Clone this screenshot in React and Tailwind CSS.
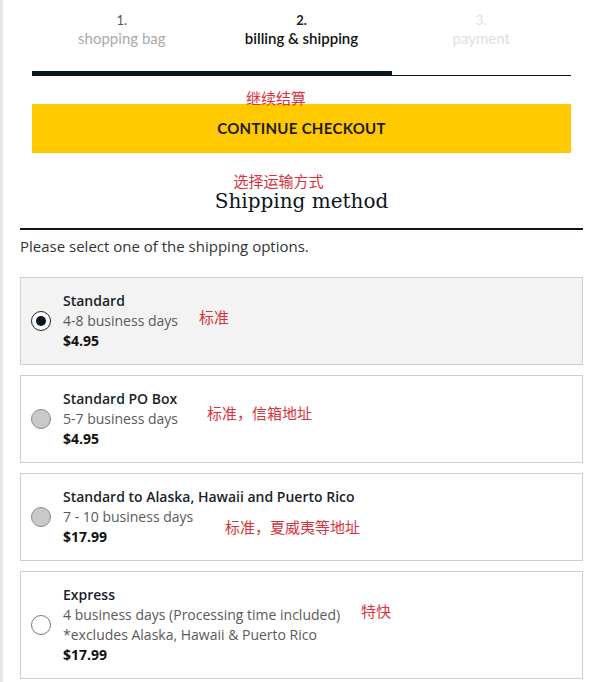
import React, { useState } from 'react';

const steps = [
  { num: '1.', label: 'shopping bag', state: 'done' },
  { num: '2.', label: 'billing & shipping', state: 'current' },
  { num: '3.', label: 'payment', state: 'todo' },
];

const options = [
  { id: 'standard', title: 'Standard', lines: ['4-8 business days'], price: '$4.95', note: '标准', noteClass: 'left-[178px] top-[30px]', radio: 'default' },
  { id: 'po', title: 'Standard PO Box', lines: ['5-7 business days'], price: '$4.95', note: '标准，信箱地址', noteClass: 'left-[186px] top-[28px]', radio: 'grey' },
  { id: 'ak', title: 'Standard to Alaska, Hawaii and Puerto Rico', lines: ['7 - 10 business days'], price: '$17.99', note: '标准，夏威夷等地址', noteClass: 'left-[204px] top-[44px]', radio: 'grey' },
  { id: 'express', title: 'Express', lines: ['4 business days (Processing time included)', '*excludes Alaska, Hawaii & Puerto Rico'], price: '$17.99', note: '特快', noteClass: 'left-[340px] top-[30px]', radio: 'white' },
];

const cjk = "font-['Noto_Sans_CJK_SC',sans-serif]";
const body = "font-['Open_Sans','Noto_Sans',sans-serif]";

function Radio({ checked, kind }) {
  if (checked) {
    return (
      <span className="flex h-[20px] w-[20px] items-center justify-center rounded-full border-[1.5px] border-[#222] bg-white">
        <span className="h-[10px] w-[10px] rounded-full bg-[#0b1622]" />
      </span>
    );
  }
  const look = kind === 'grey' ? 'bg-[#c9c9c9] border-[#8a8a8a]' : 'bg-white border-[#777]';
  return <span className={`block h-[20px] w-[20px] rounded-full border ${look}`} />;
}

export default function App() {
  const [selected, setSelected] = useState('standard');

  return (
    <div className="min-h-[682px] w-[600px] border-l-[3px] border-[#e6e6e6] bg-white">
      {/* checkout steps */}
      <div className="mx-[29px] pt-[12px]">
        <div className="grid grid-cols-3 font-['Lato',sans-serif] text-center">
          {steps.map((s) => (
            <div key={s.num} className="flex flex-col items-center">
              <span
                className={`text-[13px] leading-[17px] ${
                  s.state === 'current' ? 'font-bold text-[#222]' : s.state === 'done' ? 'text-[#555]' : 'text-[#e0e0e0]'
                }`}
              >
                {s.num}
              </span>
              <span
                className={`text-[15px] leading-[19px] ${
                  s.state === 'current' ? 'font-semibold text-[#111]' : s.state === 'done' ? 'text-[#a9a9a9]' : 'text-[#dedede]'
                }`}
              >
                {s.label}
              </span>
            </div>
          ))}
        </div>
        <div className="mt-[23px] flex items-end">
          <div className="h-[5px] w-[360px] bg-[#0b1622]" />
          <div className="h-[1px] flex-1 bg-[#111]" />
        </div>

        <div className="relative mt-[28px]">
          <span className={`absolute left-[214px] top-[-15px] text-[15px] leading-[18px] text-[#d8323c] ${cjk}`}>继续结算</span>
          <button className="flex h-[49px] w-full items-center justify-center bg-[#ffc900] font-['Lato',sans-serif] text-[15px] font-bold tracking-[0.3px] text-[#1c1c1c]">
            CONTINUE CHECKOUT
          </button>
        </div>
      </div>

      {/* shipping method */}
      <div className="mx-[17px] mt-[20px]">
        <div className="flex flex-col items-center">
          <span className={`-ml-[46px] text-[15px] leading-[16px] text-[#d8323c] ${cjk}`}>选择运输方式</span>
          <h2 className="-mt-[1px] font-['DejaVu_Serif',serif] text-[20px] leading-[26px] text-[#0d1520]">Shipping method</h2>
        </div>
        <div className="mt-[14px] h-[2px] bg-[#0b1622]" />
        <p className={`mt-[6px] text-[15px] leading-[20px] text-[#333] ${body}`}>Please select one of the shipping options.</p>

        <div className="mt-[21px] flex flex-col gap-[10px]">
          {options.map((o) => {
            const checked = selected === o.id;
            return (
              <label
                key={o.id}
                onClick={() => setSelected(o.id)}
                className={`relative flex cursor-pointer items-center border border-[#cfcfcf] py-[13px] pl-[10px] ${
                  checked ? 'bg-[#f3f3f3]' : 'bg-white'
                } ${body}`}
              >
                <Radio checked={checked} kind={o.radio} />
                <div className="ml-[12px] text-[14px] leading-[20px]">
                  <div className="font-semibold text-[#1a1f2b]">{o.title}</div>
                  {o.lines.map((l) => (
                    <div key={l} className="text-[#5a5a5a]">{l}</div>
                  ))}
                  <div className="font-bold text-[#111]">{o.price}</div>
                </div>
                <span className={`absolute text-[15px] leading-[18px] text-[#d8323c] ${cjk} ${o.noteClass}`}>{o.note}</span>
              </label>
            );
          })}
        </div>
      </div>
    </div>
  );
}
